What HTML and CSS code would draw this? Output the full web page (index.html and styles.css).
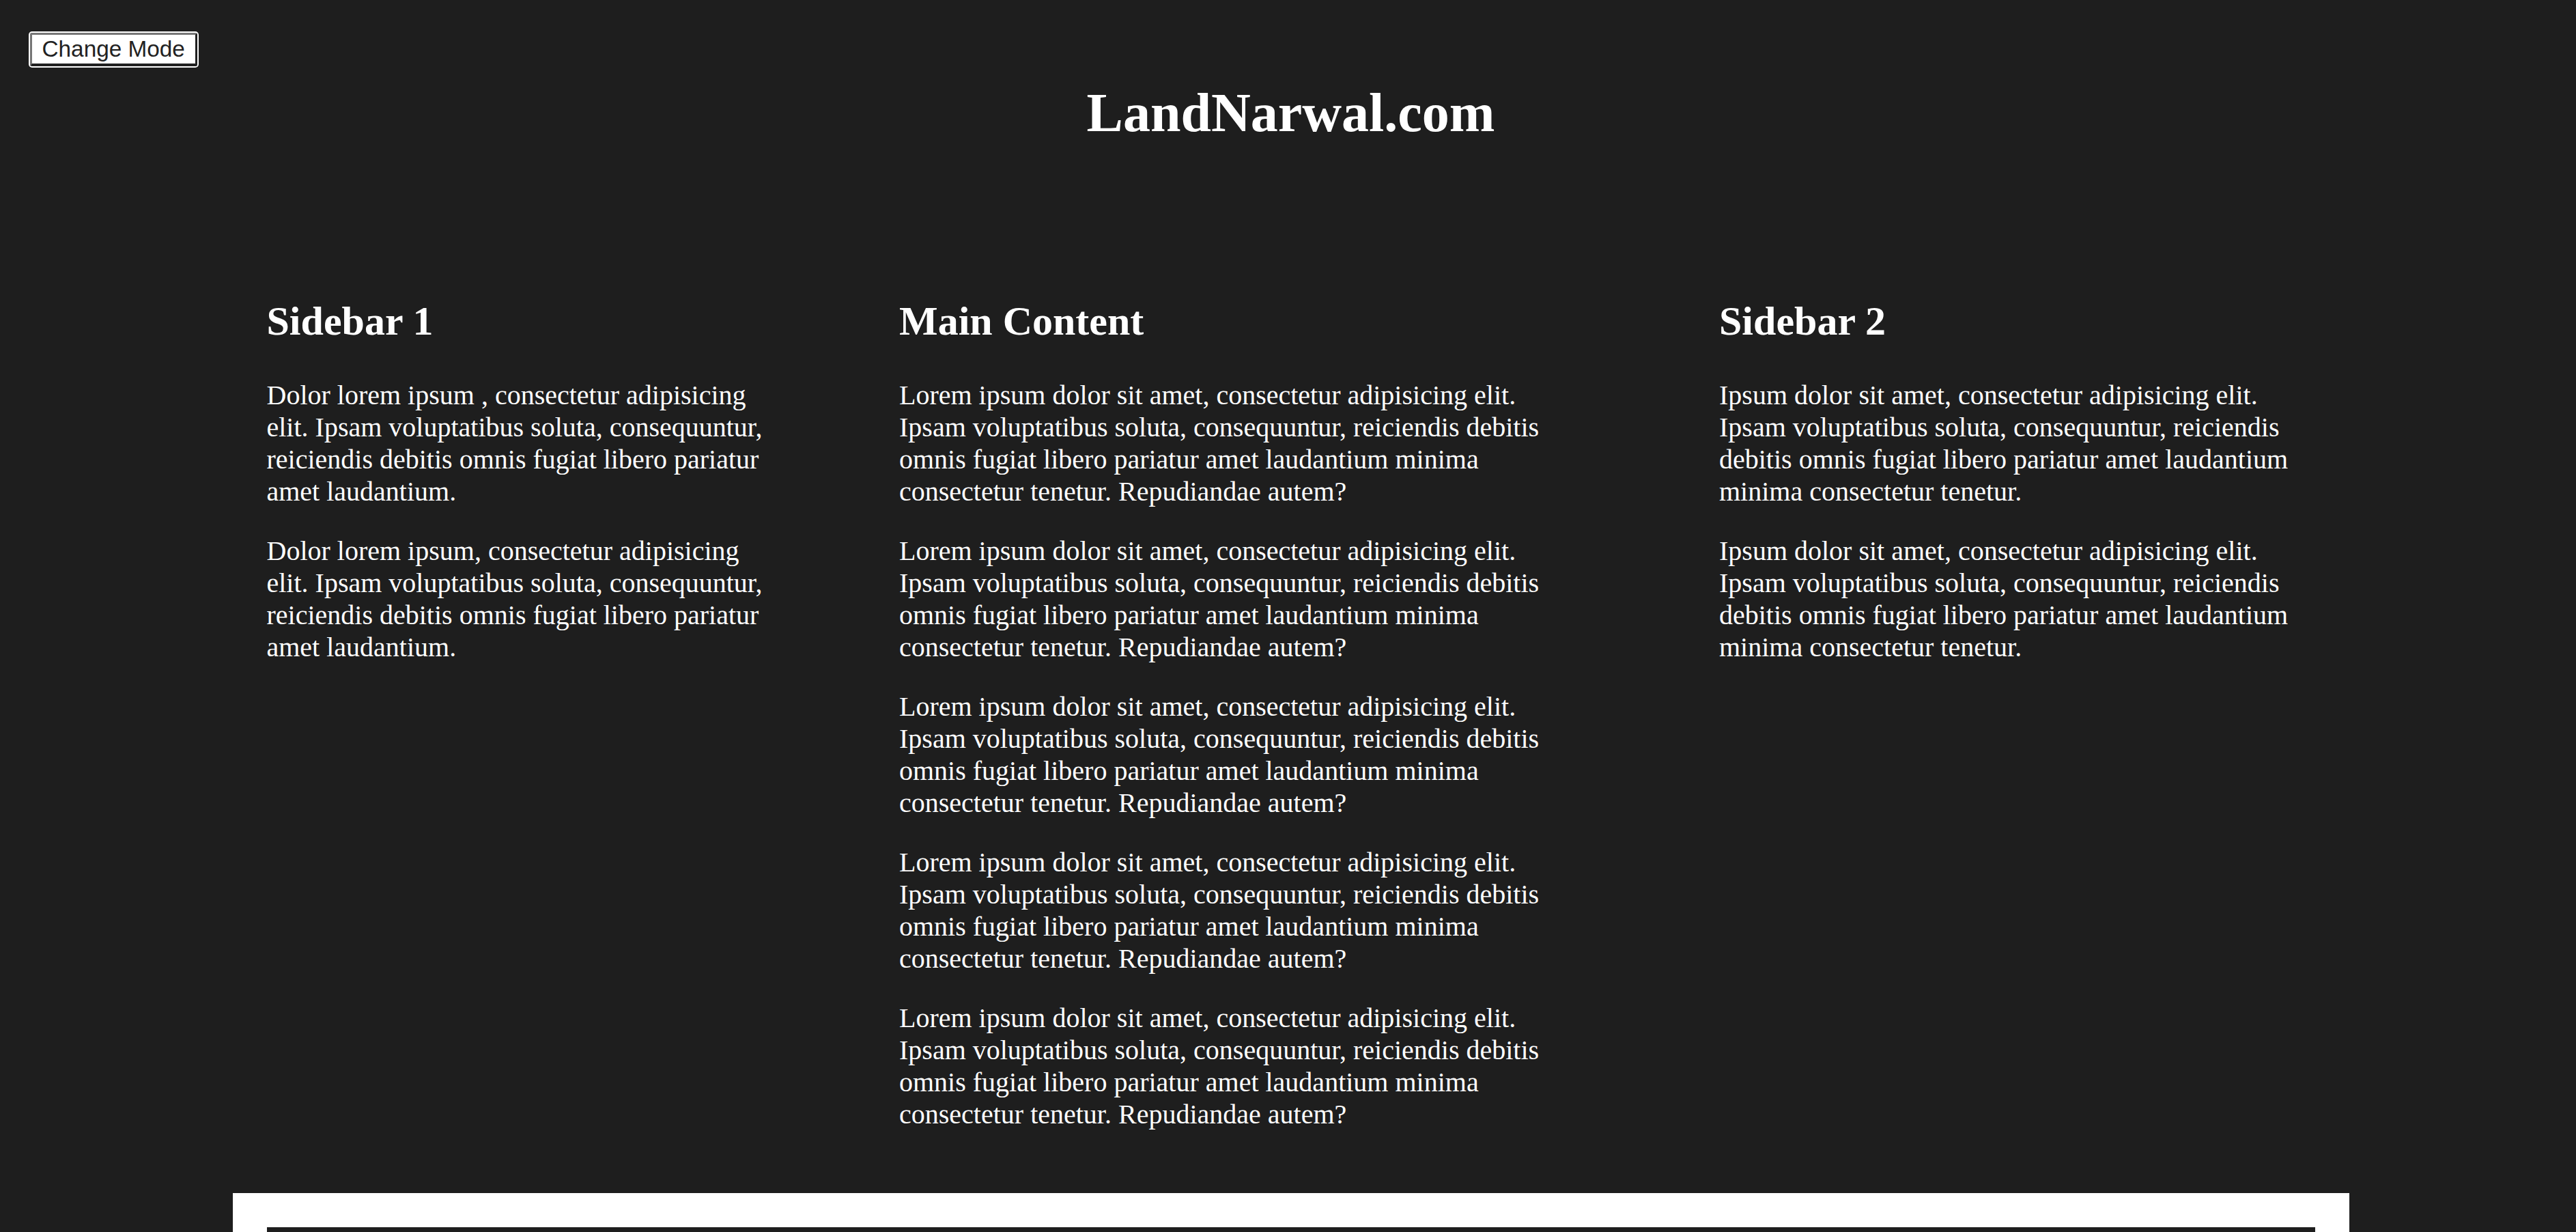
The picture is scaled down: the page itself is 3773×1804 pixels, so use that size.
FILE: index.html
```html
<!DOCTYPE html>
<html lang="en">
<head>
<meta charset="utf-8">
<title>LandNarwal.com</title>
<link rel="stylesheet" href="styles.css">
</head>
<body>
  <header class="site-header">
    <button class="mode-btn" type="button">Change Mode</button>
    <h1 class="site-title">LandNarwal.com</h1>
  </header>

  <div class="wrap">
    <section class="columns">
      <aside class="col col-left">
        <h2 class="col-title">Sidebar 1</h2>
        <p>Dolor lorem ipsum , consectetur adipisicing elit. Ipsam voluptatibus soluta, consequuntur, reiciendis debitis omnis fugiat libero pariatur amet laudantium.</p>
        <p>Dolor lorem ipsum, consectetur adipisicing elit. Ipsam voluptatibus soluta, consequuntur, reiciendis debitis omnis fugiat libero pariatur amet laudantium.</p>
      </aside>
      <main class="col col-main">
        <h2 class="col-title">Main Content</h2>
        <p>Lorem ipsum dolor sit amet, consectetur adipisicing elit. Ipsam voluptatibus soluta, consequuntur, reiciendis debitis omnis fugiat libero pariatur amet laudantium minima consectetur tenetur. Repudiandae autem?</p>
        <p>Lorem ipsum dolor sit amet, consectetur adipisicing elit. Ipsam voluptatibus soluta, consequuntur, reiciendis debitis omnis fugiat libero pariatur amet laudantium minima consectetur tenetur. Repudiandae autem?</p>
        <p>Lorem ipsum dolor sit amet, consectetur adipisicing elit. Ipsam voluptatibus soluta, consequuntur, reiciendis debitis omnis fugiat libero pariatur amet laudantium minima consectetur tenetur. Repudiandae autem?</p>
        <p>Lorem ipsum dolor sit amet, consectetur adipisicing elit. Ipsam voluptatibus soluta, consequuntur, reiciendis debitis omnis fugiat libero pariatur amet laudantium minima consectetur tenetur. Repudiandae autem?</p>
        <p>Lorem ipsum dolor sit amet, consectetur adipisicing elit. Ipsam voluptatibus soluta, consequuntur, reiciendis debitis omnis fugiat libero pariatur amet laudantium minima consectetur tenetur. Repudiandae autem?</p>
      </main>
      <aside class="col col-right">
        <h2 class="col-title">Sidebar 2</h2>
        <p>Ipsum dolor sit amet, consectetur adipisicing elit. Ipsam voluptatibus soluta, consequuntur, reiciendis debitis omnis fugiat libero pariatur amet laudantium minima consectetur tenetur.</p>
        <p>Ipsum dolor sit amet, consectetur adipisicing elit. Ipsam voluptatibus soluta, consequuntur, reiciendis debitis omnis fugiat libero pariatur amet laudantium minima consectetur tenetur.</p>
      </aside>
    </section>

    <footer class="site-footer">
      <div class="footer-inner"></div>
    </footer>
  </div>
</body>
</html>
```

FILE: styles.css
```css
html, body {
  background: #1e1e1e;
}

body {
  margin: 0;
  padding: 0 0 0 8px;
  color: #ffffff;
  font-family: "Liberation Serif", "Times New Roman", serif;
  font-size: 40px;
}

.site-header {
  display: flex;
  flex-direction: column;
  align-items: flex-start;
  padding-top: 47.7px;
}

.mode-btn {
  margin-left: 35.7px;
  box-sizing: border-box;
  width: 245px;
  height: 49px;
  padding: 0 14px;
  font-family: "Liberation Sans", Arial, sans-serif;
  font-size: 33.33px;
  line-height: 38px;
  color: #222222;
  background: #ffffff;
  border-style: solid;
  border-width: 3px 3px 4px 3px;
  border-color: #767676 #202020 #202020 #767676;
  border-radius: 3px;
  box-shadow: 0 0 0 2px #ffffff;
  cursor: pointer;
}

.site-title {
  align-self: stretch;
  margin: 23px 0 0 0;
  text-align: center;
  font-size: 80px;
  font-weight: bold;
  line-height: normal;
}

.wrap {
  width: 3100px;
  margin: 0 auto;
}

.columns {
  display: grid;
  grid-template-columns: 926.5px 1201px 1fr;
  padding: 225.4px 50px 0 50px;
  align-items: start;
}

.col-title {
  margin: 0 0 49.8px 0;
  font-size: 60px;
  font-weight: bold;
  line-height: normal;
}

.col p {
  margin: 0 0 40px 0;
  line-height: 47px;
}

.col-left {
  max-width: 750px;
}

.col-main {
  max-width: 975px;
}

.col-right {
  max-width: 873px;
}

.site-footer {
  margin-top: 52px;
  background: #ffffff;
  padding: 50px 50px 0 50px;
}

.footer-inner {
  height: 300px;
  background: #1e1e1e;
}
```
